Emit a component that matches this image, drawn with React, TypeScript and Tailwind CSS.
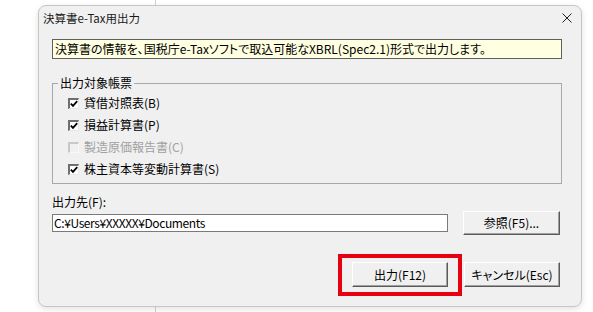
import React from "react";

function Check({ checked, disabled }: { checked: boolean; disabled?: boolean }) {
  return (
    <span
      className={
        "flex h-[11px] w-[11px] shrink-0 items-center justify-center border-l-[2px] border-t-[2px] border-b border-r " +
        (disabled
          ? "border-l-[#c8c8c8] border-t-[#c8c8c8] border-b-[#f8f8f8] border-r-[#f8f8f8] bg-[#f0f0f0]"
          : "border-l-[#6e6e6e] border-t-[#6e6e6e] border-b-[#e8e8e8] border-r-[#e8e8e8] bg-white")
      }
    >
      {checked && (
        <svg width="8" height="8" viewBox="0 0 8 8">
          <polyline points="0.8,3.6 3,5.9 7.2,1.2" fill="none" stroke="#000" strokeWidth="1.8" />
        </svg>
      )}
    </span>
  );
}

function Btn({ label, w }: { label: string; w: string }) {
  return (
    <div
      className={
        "flex items-center justify-center border-l border-t border-l-white border-t-white border-b border-r border-b-[#5a5a5a] border-r-[#5a5a5a] bg-[#f0f0f0] text-[12px] leading-[14px] shadow-[inset_-1px_-1px_0_#a0a0a0] " +
        w
      }
    >
      {label}
    </div>
  );
}

export default function App() {
  const rows = [
    { label: "貸借対照表(B)", checked: true },
    { label: "損益計算書(P)", checked: true },
    { label: "製造原価報告書(C)", checked: false, disabled: true },
    { label: "株主資本等変動計算書(S)", checked: true },
  ];
  return (
    <div className="relative h-[312px] w-[593px] overflow-hidden bg-white font-['Noto_Sans_CJK_JP',sans-serif] text-black">
      <div className="absolute left-[155px] top-0 h-full w-px bg-[#d2d2d2]" />
      <div className="relative ml-[38px] mt-[5px] flex h-[302px] w-[544px] flex-col rounded-[8px] border border-[#c6c6c6] bg-[#f0f0f0] shadow-[0_2px_6px_rgba(0,0,0,0.12)]">
        <div className="flex h-[24px] items-center justify-between pl-[4px] pr-[9px]">
          <span className="text-[11.5px] leading-[14px] text-[#1a1a1a]">決算書e-Tax用出力</span>
          <svg width="10" height="10" viewBox="0 0 10 10">
            <line x1="0.5" y1="0.5" x2="9.5" y2="9.5" stroke="#222" strokeWidth="1" />
            <line x1="9.5" y1="0.5" x2="0.5" y2="9.5" stroke="#222" strokeWidth="1" />
          </svg>
        </div>
        <div className="flex flex-col pl-[13px]">
          <div className="mt-[9px] flex h-[20px] w-[510px] items-center border border-[#5f5f5f] bg-[#ffffe1] pl-[2px] text-[12px] leading-[14px] [font-feature-settings:'palt']">
            決算書の情報を、国税庁e-Taxソフトで取込可能なXBRL(Spec2.1)形式で出力します。
          </div>
          <fieldset className="mt-[17px] w-[510px] border border-[#a8a8a8] pb-[3px] pl-[5px] pt-[2px]">
            <legend className="px-[2px] text-[12px] leading-[14px]">出力対象帳票</legend>
            <div className="flex flex-col pl-[10px]">
              {rows.map((r) => (
                <div key={r.label} className="flex h-[22px] items-center gap-[5px]">
                  <Check checked={r.checked} disabled={r.disabled} />
                  <span className={"text-[12px] leading-[14px] " + (r.disabled ? "text-[#a0a0a0]" : "text-black")}>
                    {r.label}
                  </span>
                </div>
              ))}
            </div>
          </fieldset>
          <div className="mt-[11px] text-[12px] leading-[14px]">出力先(F):</div>
          <div className="mt-[2px] flex h-[24px] w-[508px] items-center gap-[15px]">
            <div className="flex h-[18px] w-[396px] items-center border border-[#7a7a7a] bg-white pl-[1px] text-[12px] leading-[14px] tracking-[-0.4px]">
              C:¥Users¥XXXXX¥Documents
            </div>
            <Btn label="参照(F5)..." w="h-[24px] w-[97px]" />
          </div>
          <div className="mt-[27px] flex w-[508px] justify-end gap-[16px]">
            <div className="relative">
              <Btn label="出力(F12)" w="h-[25px] w-[96px]" />
              <div className="absolute bottom-[-9px] left-[-14px] right-[-14px] top-[-8px] border-[4px] border-[#e60012]" />
            </div>
            <Btn label="キャンセル(Esc)" w="h-[25px] w-[96px] [font-feature-settings:'palt']" />
          </div>
        </div>
      </div>
    </div>
  );
}
